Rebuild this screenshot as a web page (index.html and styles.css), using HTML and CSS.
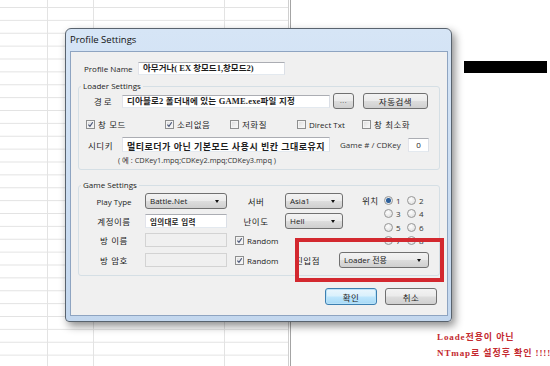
FILE: index.html
```html
<!DOCTYPE html>
<html lang="ko">
<head>
<meta charset="UTF-8" />
<title>Profile Settings</title>
<link rel="stylesheet" href="styles.css">
</head>
<body>
<div class="desk">
  <div class="sheet"></div>

  <div class="win">
    <div class="title">Profile Settings</div>
    <div class="client">
      <div class="profile-row">
        <span class="lbl en profile-lbl">Profile Name</span>
        <span class="field profile-field">아무거나( EX 창모드1,창모드2)</span>
      </div>

      <div class="group loader">
        <span class="legend">Loader Settings</span>
        <div class="path-row">
          <span class="lbl ko path-lbl">경로</span>
          <span class="field path-field">디아블로2 폴더내에 있는 GAME.exe파일 지정</span>
          <span class="btn dots">...</span>
          <span class="btn auto">자동검색</span>
        </div>
        <div class="check-row">
          <span class="chk w1"><span class="cb"><svg viewBox="0 0 9 9"><path d="M1.8 4.6 L3.8 6.8 L7.4 1.6" /></svg></span><span class="ko">창 모드</span></span>
          <span class="chk w2"><span class="cb"><svg viewBox="0 0 9 9"><path d="M1.8 4.6 L3.8 6.8 L7.4 1.6" /></svg></span><span class="ko">소리없음</span></span>
          <span class="chk w3"><span class="cb"></span><span class="ko">저화질</span></span>
          <span class="chk w4"><span class="cb"></span><span class="en">Direct Txt</span></span>
          <span class="chk"><span class="cb"></span><span class="ko">창 최소화</span></span>
        </div>
        <div class="cd-row">
          <span class="lbl ko cd-lbl">시디키</span>
          <span class="field cd-field">멀티로더가 아닌 기본모드 사용시 빈칸 그대로유지</span>
          <span class="lbl en cd-game">Game # / CDKey</span>
          <span class="field cd-num">0</span>
        </div>
        <div class="example">( 예 : CDKey1.mpq;CDKey2.mpq;CDKey3.mpq )</div>
      </div>

      <div class="group game">
        <span class="legend">Game Settings</span>
        <div class="game-grid">
          <span class="glbl en c1">Play Type</span>
          <span class="combo">Battle.Net</span>
          <span class="glbl ko">서버</span>
          <span class="combo">Asia1</span>
          <span class="glbl ko pos-lbl">위치</span>
          <div class="radios">
            <span class="rd"><span class="dot on"></span>1</span>
            <span class="rd"><span class="dot"></span>2</span>
            <span class="rd"><span class="dot"></span>3</span>
            <span class="rd"><span class="dot"></span>4</span>
            <span class="rd"><span class="dot"></span>5</span>
            <span class="rd"><span class="dot"></span>6</span>
            <span class="rd"><span class="dot"></span>7</span>
            <span class="rd"><span class="dot"></span>8</span>
          </div>

          <span class="glbl ko c1">계정이름</span>
          <span class="field acc-field">임의대로 입력</span>
          <span class="glbl ko">난이도</span>
          <span class="combo">Hell</span>

          <span class="glbl ko c1">방 이름</span>
          <span class="field off"></span>
          <span class="chk rnd"><span class="cb"><svg viewBox="0 0 9 9"><path d="M1.8 4.6 L3.8 6.8 L7.4 1.6" /></svg></span><span class="en">Random</span></span>

          <span class="glbl ko c1">방 암호</span>
          <span class="field off"></span>
          <span class="chk rnd"><span class="cb"><svg viewBox="0 0 9 9"><path d="M1.8 4.6 L3.8 6.8 L7.4 1.6" /></svg></span><span class="en">Random</span></span>
          <div class="entry">
            <span class="ko entry-lbl">진입점</span>
            <span class="combo entry-combo">Loader 전용</span>
          </div>
        </div>
      </div>

      <div class="btn-row">
        <span class="btn ok">확인</span>
        <span class="btn">취소</span>
      </div>
    </div>
  </div>

  <div class="mark"></div>
  <div class="bar"></div>
  <div class="note">Loade전용이 아닌<br>NTmap로 설정후 확인 !!!!</div>
</div>
</body>
</html>
```

FILE: styles.css
```css
body {
  margin: 0;
  background: #fff;
  font-family: "Open Sans", "Noto Sans CJK KR", sans-serif;
  color: #1e1e1e;
}
.desk {
  position: relative;
  width: 550px;
  height: 366px;
  overflow: hidden;
  background: #fff;
}
.sheet {
  width: 288px;
  height: 366px;
  border-right: 1px solid #cfcfcf;
  box-shadow: 1px 0 0 #fff, 2px 0 0 #a4a4a4;
  background:
    linear-gradient(#e3e3e3, #e3e3e3) 47px 0 / 1px 100% no-repeat,
    linear-gradient(#e3e3e3, #e3e3e3) 93px 0 / 1px 100% no-repeat,
    linear-gradient(#e3e3e3, #e3e3e3) 224px 0 / 1px 100% no-repeat,
    linear-gradient(#e3e3e3 1px, transparent 1px) 0 7px / 100% 12.88px repeat-y;
}

/* window */
.win {
  position: absolute;
  left: 65px;
  top: 28px;
  width: 387px;
  height: 294px;
  box-sizing: border-box;
  border: 1px solid #59636e;
  border-radius: 6px 6px 4px 4px;
  background: linear-gradient(#d6e5f6, #c3d7ee);
  box-shadow: 3px 4px 8px rgba(0,0,0,0.45);
  padding: 0 3px 5px 4px;
  display: flex;
  flex-direction: column;
}
.title {
  height: 22px;
  line-height: 22px;
  font-size: 9.5px;
  color: #111;
}
.client {
  flex: 1;
  box-sizing: border-box;
  background: #f0f0f0;
  border: 1px solid #8ea4c1;
}

.en { font-family: "Open Sans", sans-serif; font-size: 8px; }
.ko { font-family: "Noto Sans CJK KR", sans-serif; font-size: 8.5px; letter-spacing: 0.5px; }

.field {
  box-sizing: border-box;
  display: block;
  background: #fff;
  border: 1px solid;
  border-color: #abadb3 #dbdfe6 #e3e9ef #e2e3ea;
  font-family: "Liberation Serif", "Noto Sans CJK KR", serif;
  font-weight: bold;
  font-size: 8.5px;
  white-space: nowrap;
  overflow: hidden;
  padding-left: 4px;
}
.field.off {
  background: #f0f0f0;
  border-color: #d3d3d3;
  height: 14px;
  align-self: center;
}

.btn {
  box-sizing: border-box;
  display: flex;
  align-items: center;
  justify-content: center;
  border: 1px solid #707070;
  border-radius: 3px;
  background: linear-gradient(#f3f3f3 0%, #ebebeb 48%, #dddddd 52%, #d0d0d0 100%);
  font-family: "Noto Sans CJK KR", sans-serif;
  font-size: 8.5px;
  letter-spacing: 0.5px;
  color: #222;
}
.btn.ok {
  border-color: #3c7fb1;
  background: linear-gradient(#eaf6fd 0%, #d9f0fc 48%, #bee6fd 52%, #a7d9f5 100%);
  box-shadow: inset 0 0 0 1px #b9e2f8;
}

/* profile row */
.profile-row {
  display: flex;
  align-items: center;
  height: 13px;
  margin: 10px 0 0 13px;
}
.profile-lbl { width: 54px; }
.profile-field {
  width: 147px;
  height: 13px;
  line-height: 11px;
  padding-left: 4px;
}

/* group boxes */
.group {
  box-sizing: border-box;
  width: 362px;
  margin: 11px 0 0 7px;
  border: 1px solid #d5dfe5;
  border-radius: 3px;
}
.legend {
  display: block;
  width: max-content;
  height: 12px;
  line-height: 12px;
  margin: -7px 0 0 2px;
  padding: 0 2px;
  background: #f0f0f0;
  font-size: 8px;
  color: #222;
}
.loader { height: 84px; }

.path-row {
  display: flex;
  align-items: center;
  height: 16px;
  margin-top: 1px;
  padding-left: 15px;
}
.path-lbl { width: 28px; letter-spacing: 2px; }
.path-field {
  width: 208px;
  height: 13px;
  line-height: 11px;
  letter-spacing: 0.2px;
}
.dots { width: 21px; height: 16px; margin-left: 3px; font-family: "Open Sans", sans-serif; font-size: 7px; color: #555; padding-bottom: 2px; }
.auto { width: 65px; height: 16px; margin-left: 9px; }

.check-row {
  display: flex;
  align-items: center;
  height: 14px;
  margin-top: 8px;
  padding-left: 7px;
}
.chk {
  display: flex;
  align-items: center;
}
.w1 { width: 79px; }
.w2 { width: 65px; }
.w3 { width: 67px; }
.w4 { width: 65px; }
.cb {
  box-sizing: border-box;
  width: 9px;
  height: 9px;
  margin-right: 3px;
  border: 1px solid #8e8f8f;
  background: linear-gradient(135deg, #dcdcdc, #fbfbfb);
  box-shadow: inset 0 0 0 1px #f4f4f4;
  display: flex;
}
.cb svg { width: 7px; height: 7px; }
.cb path { fill: none; stroke: #4a5679; stroke-width: 1.5; }

.cd-row {
  display: flex;
  align-items: center;
  height: 15px;
  margin-top: 6px;
  padding-left: 9px;
}
.cd-lbl { width: 34px; }
.cd-field {
  width: 208px;
  height: 15px;
  line-height: 15px;
  padding-top: 2px;
  font-size: 9px;
  letter-spacing: 0.5px;
}
.cd-game { width: 68px; margin-left: 10px; color: #333; }
.cd-num {
  width: 21px;
  height: 14px;
  line-height: 12px;
  padding: 0;
  text-align: center;
  font-family: "Open Sans", sans-serif;
  font-weight: normal;
  font-size: 8px;
}
.example {
  height: 14px;
  line-height: 14px;
  margin-top: 1px;
  padding-left: 39px;
  font-size: 7.4px;
  color: #333;
}

/* game settings */
.game {
  height: 91px;
  margin-top: 15px;
}
.game-grid {
  display: grid;
  grid-template-columns: 66px 82px 58px 58px 40px 52px;
  grid-template-rows: 20px 19px 20px 20px;
}
.glbl {
  align-self: center;
  text-align: center;
  color: #222;
}
.c1 { grid-column: 1; padding: 0 3px 0 7px; }
.pos-lbl { text-align: left; padding-left: 19px; align-self: start; margin-top: 3px; }
.combo {
  position: relative;
  box-sizing: border-box;
  align-self: center;
  height: 16px;
  line-height: 14px;
  padding-left: 4px;
  border: 1px solid #707070;
  border-radius: 3px;
  background: linear-gradient(#f3f3f3 0%, #ebebeb 48%, #dddddd 52%, #cfcfcf 100%);
  font-size: 8px;
  color: #222;
}
.combo::after {
  content: "";
  position: absolute;
  right: 7px;
  top: 6px;
  border-left: 2.5px solid transparent;
  border-right: 2.5px solid transparent;
  border-top: 3px solid #111;
}
.radios {
  grid-column: 6;
  grid-row: 1 / 4;
  display: grid;
  grid-template-columns: 23px 23px;
  grid-auto-rows: 13.5px;
  padding: 2.5px 0 0 1px;
}
.rd {
  display: flex;
  align-items: center;
  font-size: 8px;
  color: #333;
}
.dot {
  box-sizing: border-box;
  width: 9px;
  height: 9px;
  margin-right: 3px;
  border-radius: 50%;
  border: 1px solid #979797;
  background: radial-gradient(circle at 40% 35%, #fdfdfd, #dadada);
}
.dot.on {
  background: radial-gradient(circle, #2e5f9a 0 2px, #7aa3cc 2.6px, #e9e9e9 3px);
}
.acc-field {
  align-self: center;
  height: 14px;
  line-height: 13px;
  font-family: "Noto Sans CJK KR", sans-serif;
  font-size: 7.5px;
  letter-spacing: 0.3px;
}
.game-grid .combo { height: 16px; }
.rnd { padding-left: 8px; }
.rnd .en { color: #222; }
.entry {
  grid-column: 4 / 7;
  display: flex;
  align-items: center;
  padding-left: 10px;
}
.entry-lbl { width: 44px; }
.entry-combo { width: 90px; height: 15px; line-height: 13px; }

.btn-row {
  display: flex;
  justify-content: flex-end;
  gap: 8px;
  margin-top: 12px;
  padding-right: 10px;
}
.btn-row .btn { width: 52px; height: 17px; }

/* annotations */
.mark {
  position: absolute;
  left: 295px;
  top: 238px;
  width: 149px;
  height: 44px;
  box-sizing: border-box;
  border: 4px solid #d3282f;
}
.bar {
  position: absolute;
  left: 464px;
  top: 61px;
  width: 83px;
  height: 12px;
  background: #000;
}
.note {
  position: absolute;
  left: 437px;
  top: 329px;
  font-family: "Liberation Serif", "Noto Sans CJK KR", serif;
  font-weight: bold;
  font-size: 9px;
  line-height: 16px;
  letter-spacing: 0.9px;
  color: #c42a30;
  white-space: nowrap;
}
```
